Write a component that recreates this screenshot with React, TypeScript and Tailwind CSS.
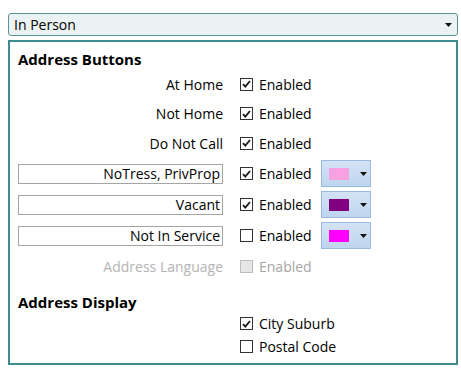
import React from "react";

const font = { fontFamily: '"Open Sans", "Noto Sans", sans-serif' };

const Check = ({ checked, disabled }: { checked?: boolean; disabled?: boolean }) => (
  <span
    className={`flex h-[13px] w-[13px] items-center justify-center border ${
      disabled ? "border-[#bcbcbc] bg-[#e6e6e6]" : "border-[#333333] bg-white"
    }`}
  >
    {checked && (
      <svg width="9" height="8" viewBox="0 0 9 8">
        <path d="M1 4.2 L3.3 6.6 L8 1" fill="none" stroke="#1a1a1a" strokeWidth="1.8" />
      </svg>
    )}
  </span>
);

const Arrow = () => (
  <svg width="7" height="4" viewBox="0 0 7 4">
    <path d="M0 0 H7 L3.5 4 Z" fill="#111" />
  </svg>
);

const ColorPick = ({ color }: { color: string }) => (
  <div className="flex h-[27px] w-[50px] items-center border border-[#9ab9df] bg-gradient-to-b from-[#d3e3f5] to-[#bed5ef] pl-[7px]">
    <span className="h-[12px] w-[20px]" style={{ background: color }} />
    <span className="ml-[11px]">
      <Arrow />
    </span>
  </div>
);

const Enabled = ({ checked, disabled }: { checked?: boolean; disabled?: boolean }) => (
  <div className={`flex w-[81px] items-center gap-[6px] ${disabled ? "text-[#a6a6a6]" : "text-black"}`}>
    <Check checked={checked} disabled={disabled} />
    <span>Enabled</span>
  </div>
);

type Row = { label: string; h: string; checked?: boolean; box?: boolean; color?: string; disabled?: boolean };

const rows: Row[] = [
  { label: "At Home", h: "h-[30px]", checked: true },
  { label: "Not Home", h: "h-[29px]", checked: true },
  { label: "Do Not Call", h: "h-[30px]", checked: true },
  { label: "NoTress, PrivProp", h: "h-[31px]", checked: true, box: true, color: "#f7a1e1" },
  { label: "Vacant", h: "h-[31px]", checked: true, box: true, color: "#800080" },
  { label: "Not In Service", h: "h-[31px]", box: true, color: "#ff00ff" },
  { label: "Address Language", h: "h-[31px]", disabled: true },
];

export default function App() {
  return (
    <div className="h-[374px] w-[461px] bg-white px-[8px] pt-[13px] text-[14px] text-black" style={font}>
      <div className="flex h-[23px] w-[450px] items-center justify-between rounded-[3px] border border-[#5a9499] bg-[#eaf2f3] pl-[5px] pr-[5px]">
        <span>In Person</span>
        <Arrow />
      </div>
      <div className="mt-[4px] h-[325px] w-[450px] border-2 border-[#3f8b92] pl-[8px] pt-[7px]">
        <div className="flex h-[20px] items-center text-[15px] font-bold">Address Buttons</div>
        {rows.map((r) => (
          <div key={r.label} className={`flex items-center ${r.h}`}>
            {r.box ? (
              <div className="flex h-[20px] w-[205px] items-center justify-end border border-[#a5a5a5] pr-[2px]">
                {r.label}
              </div>
            ) : (
              <div className={`w-[205px] text-right ${r.disabled ? "text-[#b4b4b4]" : ""}`}>{r.label}</div>
            )}
            <div className="ml-[17px]">
              <Enabled checked={r.checked} disabled={r.disabled} />
            </div>
            {r.color && <ColorPick color={r.color} />}
          </div>
        ))}
        <div className="mt-[10px] flex h-[20px] items-center text-[15px] font-bold">Address Display</div>
        <div className="flex h-[23px] items-center gap-[6px] pl-[222px]">
          <Check checked />
          <span>City Suburb</span>
        </div>
        <div className="flex h-[23px] items-center gap-[6px] pl-[222px]">
          <Check />
          <span>Postal Code</span>
        </div>
      </div>
    </div>
  );
}
